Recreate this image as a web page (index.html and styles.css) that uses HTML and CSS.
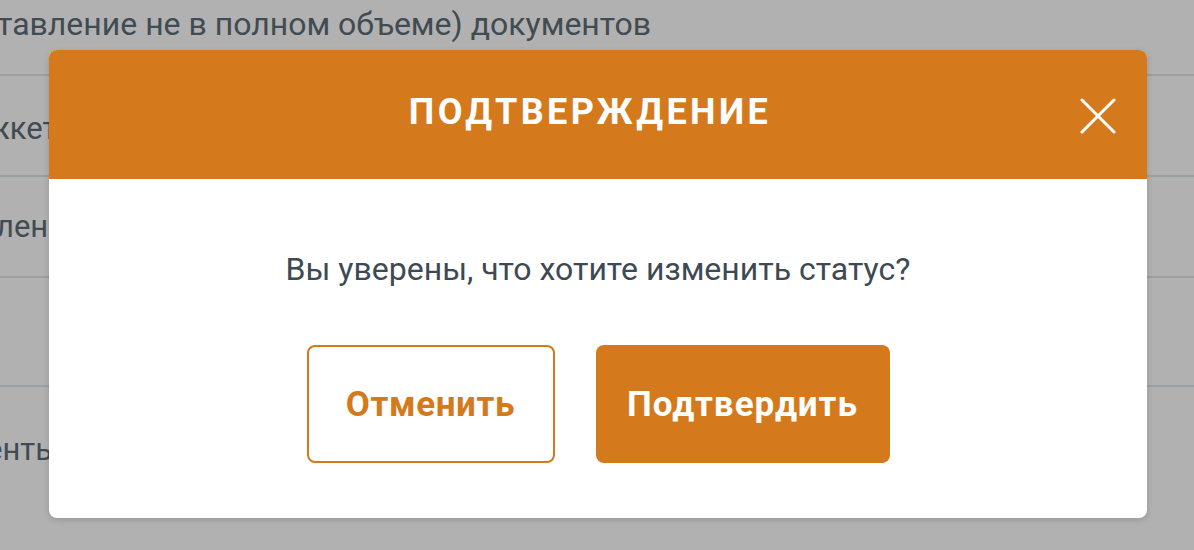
FILE: index.html
```html
<!DOCTYPE html>
<html lang="ru">
<head>
<meta charset="utf-8">
<link rel="stylesheet" href="styles.css">
</head>
<body>
<div class="page">
  <div class="row row-first"><span class="cell c1">тавление не в полном объеме) документов</span></div>
  <div class="row row-2"><span class="cell c2">жкет</span></div>
  <div class="row row-3"><span class="cell c3">лен</span></div>
  <div class="row row-4"><span class="cell"></span></div>
  <div class="row row-5"><span class="cell c5">енть</span></div>
</div>

<div class="modal" role="dialog">
  <div class="modal-header">
    <h2 class="modal-title">ПОДТВЕРЖДЕНИЕ</h2>
    <button class="close" aria-label="Закрыть">
      <svg width="36" height="36" viewBox="0 0 36 36"><path d="M2 2 L34 34 M34 2 L2 34" stroke="#fff" stroke-width="3" stroke-linecap="round"/></svg>
    </button>
  </div>
  <div class="modal-body">
    <p class="question">Вы уверены, что хотите изменить статус?</p>
    <div class="actions">
      <button class="btn btn-outline">Отменить</button>
      <button class="btn btn-solid">Подтвердить</button>
    </div>
  </div>
</div>
</body>
</html>
```

FILE: styles.css
```css
html, body {
  margin: 0;
  padding: 0;
}
body {
  width: 1194px;
  height: 550px;
  overflow: hidden;
  background: #b1b1b1;
  font-family: Roboto, "Noto Sans", sans-serif;
  position: relative;
}
.page {
  display: flex;
  flex-direction: column;
  color: #414b52;
  font-size: 31px;
}
.row {
  display: flex;
  align-items: center;
  border-bottom: 2px solid #9ba0a3;
  white-space: nowrap;
}
.row-first { height: 76px; align-items: flex-start; padding-top: 5px; box-sizing: border-box; font-size: 32px; }
.row-2 { height: 99px; }
.row-3 { height: 99px; }
.row-4 { height: 107px; }
.row-5 { height: 120px; border-bottom: none; }
.c1 { margin-left: -3px; }
.c2 { margin-left: -14px; padding-top: 6px; }
.c3 { margin-left: -4px; padding-top: 0; }
.c5 { margin-left: -14px; padding-top: 4px; }

.modal {
  position: absolute;
  left: 49px;
  top: 50px;
  width: 1098px;
  height: 468px;
  background: #fff;
  border-radius: 8px;
  overflow: hidden;
  box-shadow: 0 2px 6px rgba(0,0,0,0.15);
  display: flex;
  flex-direction: column;
}
.modal-header {
  height: 129px;
  background: #d4791c;
  display: flex;
  align-items: center;
  justify-content: center;
  position: relative;
}
.modal-title {
  margin: 0 0 6px -16px;
  color: #fff;
  font-size: 36px;
  font-weight: 700;
  letter-spacing: 3.4px;
}
.close {
  position: absolute;
  right: 31px;
  top: 48px;
  width: 36px;
  height: 36px;
  padding: 0;
  border: 0;
  background: none;
  cursor: pointer;
}
.close svg { display: block; }
.modal-body {
  flex: 1;
  display: flex;
  flex-direction: column;
  align-items: center;
}
.question {
  margin: 70px 0 0;
  color: #3d4a53;
  font-size: 32px;
  line-height: 40px;
}
.actions {
  margin-top: 56px;
  display: flex;
  gap: 41px;
}
.btn {
  height: 118px;
  border-radius: 8px;
  font-family: Roboto, "Noto Sans", sans-serif;
  font-size: 35px;
  font-weight: 700;
  letter-spacing: 0.6px;
  box-sizing: border-box;
  cursor: pointer;
}
.btn-outline {
  width: 248px;
  background: #fff;
  color: #d4791c;
  border: 2px solid #d4791c;
}
.btn-solid {
  width: 294px;
  background: #d4791c;
  color: #fff;
  border: 0;
  letter-spacing: 1px;
}
```
